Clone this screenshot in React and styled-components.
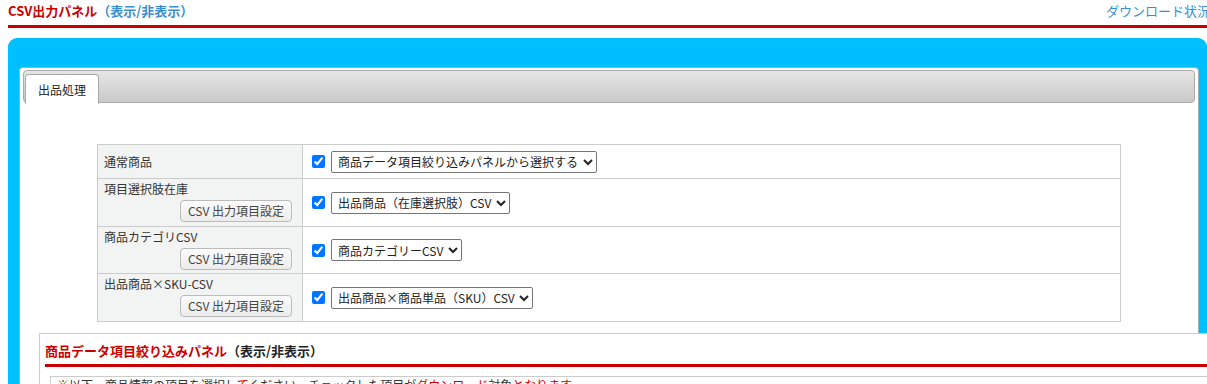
import React from "react";
import styled, { createGlobalStyle } from "styled-components";

const GlobalStyle = createGlobalStyle`
  html, body { margin: 0; padding: 0; overflow: hidden; }
  body {
    background: #fff;
    font-family: "Noto Sans CJK JP", "Noto Sans", sans-serif;
    color: #333;
  }
`;

const Page = styled.div`
  width: 1199px;
  margin-left: 8px;
`;

const Header = styled.div`
  display: flex;
  justify-content: space-between;
  align-items: center;
  padding: 2px 0 5px;
  line-height: 18px;
  border-bottom: 3px solid #cc0000;
  font-size: 13px;
`;

const Title = styled.div`
  font-weight: bold;
  color: #cc0000;
  white-space: nowrap;
`;

const Toggle = styled.span`
  color: ${(p) => (p.$dark ? "#222" : "#3a8fd0")};
  font-weight: bold;
`;

const StatusLink = styled.span`
  color: #3a8fd0;
  white-space: nowrap;
  margin-right: -3px;
`;

const BlueBox = styled.div`
  margin-top: 10px;
  background: #00bfff;
  border-radius: 9px 9px 0 0;
  padding: 29px 8px 0 11px;
`;

const WhitePanel = styled.div`
  background: #fff;
  border: 1px solid #aaa;
  border-radius: 4px 4px 0 0;
  padding: 2px 3px 40px;
`;

const TabBar = styled.div`
  display: flex;
  align-items: flex-end;
  height: 31px;
  padding: 0 2px 0 1px;
  border: 1px solid #aaa;
  border-radius: 4px;
  background: linear-gradient(#e6e6e6, #c9c9c9);
`;

const Tab = styled.div`
  height: 29px;
  margin-bottom: -2px;
  padding: 0 12px;
  display: flex;
  align-items: center;
  background: #fff;
  border: 1px solid #aaa;
  border-bottom: none;
  border-radius: 4px 4px 0 0;
  font-size: 12px;
  color: #222;
`;

const TabContent = styled.div`
  padding-top: 41px;
`;

const Table = styled.table`
  width: 1024px;
  margin: 0 auto;
  border-collapse: collapse;
  font-size: 12px;
  color: #333;
`;

const Row = styled.tr`
  height: ${(p) => p.$h}px;
`;

const LabelCell = styled.td`
  width: 205px;
  box-sizing: border-box;
  background: #f2f3f3;
  border: 1px solid #ccc;
  padding: ${(p) => (p.$withButton ? "1px 10px 3px 6px" : "0 10px 0 6px")};
  vertical-align: ${(p) => (p.$withButton ? "top" : "middle")};
  line-height: 18px;
`;

const LabelInner = styled.div`
  display: flex;
  flex-direction: column;
  align-items: stretch;
`;

const ButtonRow = styled.div`
  display: flex;
  justify-content: flex-end;
  margin-top: 2px;
`;

const SettingButton = styled.button`
  width: 112px;
  height: 22px;
  padding: 0;
  font-family: inherit;
  font-size: 12px;
  color: #444;
  background: linear-gradient(#fbfbfb, #ececec);
  border: 1px solid #bbb;
  border-radius: 4px;
  line-height: 20px;
`;

const ValueCell = styled.td`
  border: 1px solid #ccc;
  padding: 0 7px 0 5px;
  vertical-align: middle;
`;

const ValueInner = styled.div`
  display: flex;
  align-items: center;
  gap: 3px;
`;

const Check = styled.input`
  width: 13px;
  height: 13px;
  margin: 0 3px 0 4px;
  accent-color: #0075ff;
`;

const Select = styled.select`
  height: 22px;
  font-family: inherit;
  font-size: 12px;
  color: #222;
  border: 1px solid #767676;
  border-radius: 2px;
  background: #fff;
  padding: 0 1px 0 2px;
`;

const SubPanel = styled.div`
  margin: 11px 0 0 16px;
  width: 1260px;
  background: #fff;
  border: 1px solid #ccc;
  padding: 8px 0 40px 5px;
`;

const SubTitle = styled.div`
  font-size: 13px;
  font-weight: bold;
  color: #cc0000;
  line-height: 18px;
  padding-bottom: 4px;
  border-bottom: 3px solid #cc0000;
`;

const NoteBox = styled.div`
  margin: 9px 0 0 5px;
  border: 1px solid #ccc;
  padding: 0 6px;
  font-size: 12px;
  line-height: 16px;
  color: #333;
`;

const Red = styled.span`
  color: #cc0000;
`;

const rows = [
  { label: "通常商品", button: false, h: 34, value: "商品データ項目絞り込みパネルから選択する" },
  { label: "項目選択肢在庫", button: true, h: 48, value: "出品商品（在庫選択肢）CSV" },
  { label: "商品カテゴリCSV", button: true, h: 47, value: "商品カテゴリーCSV" },
  { label: "出品商品×SKU-CSV", button: true, h: 48, value: "出品商品×商品単品（SKU）CSV" },
];

export default function App() {
  return (
    <>
      <GlobalStyle />
      <Page>
        <Header>
          <Title>
            CSV出力パネル<Toggle>（表示/非表示）</Toggle>
          </Title>
          <StatusLink>ダウンロード状況</StatusLink>
        </Header>
        <BlueBox>
          <WhitePanel>
            <TabBar>
              <Tab>出品処理</Tab>
            </TabBar>
            <TabContent>
              <Table>
                <tbody>
                  {rows.map((r) => (
                    <Row key={r.label} $h={r.h}>
                      <LabelCell $withButton={r.button}>
                        <LabelInner>
                          <span>{r.label}</span>
                          {r.button && (
                            <ButtonRow>
                              <SettingButton type="button">CSV 出力項目設定</SettingButton>
                            </ButtonRow>
                          )}
                        </LabelInner>
                      </LabelCell>
                      <ValueCell>
                        <ValueInner>
                          <Check type="checkbox" defaultChecked />
                          <Select defaultValue={r.value}>
                            <option value={r.value}>{r.value}</option>
                          </Select>
                        </ValueInner>
                      </ValueCell>
                    </Row>
                  ))}
                </tbody>
              </Table>
              <SubPanel>
                <SubTitle>
                  商品データ項目絞り込みパネル<Toggle $dark>（表示/非表示）</Toggle>
                </SubTitle>
                <NoteBox>
                  ※以下、商品情報の項目を選択し<Red>て</Red>ください。チェックした項目が<Red>ダウンロード</Red>対象<Red>となります</Red>。
                  <br />
                  ※項目の並び順はCSVの出力順と同じです。
                </NoteBox>
              </SubPanel>
            </TabContent>
          </WhitePanel>
        </BlueBox>
      </Page>
    </>
  );
}
